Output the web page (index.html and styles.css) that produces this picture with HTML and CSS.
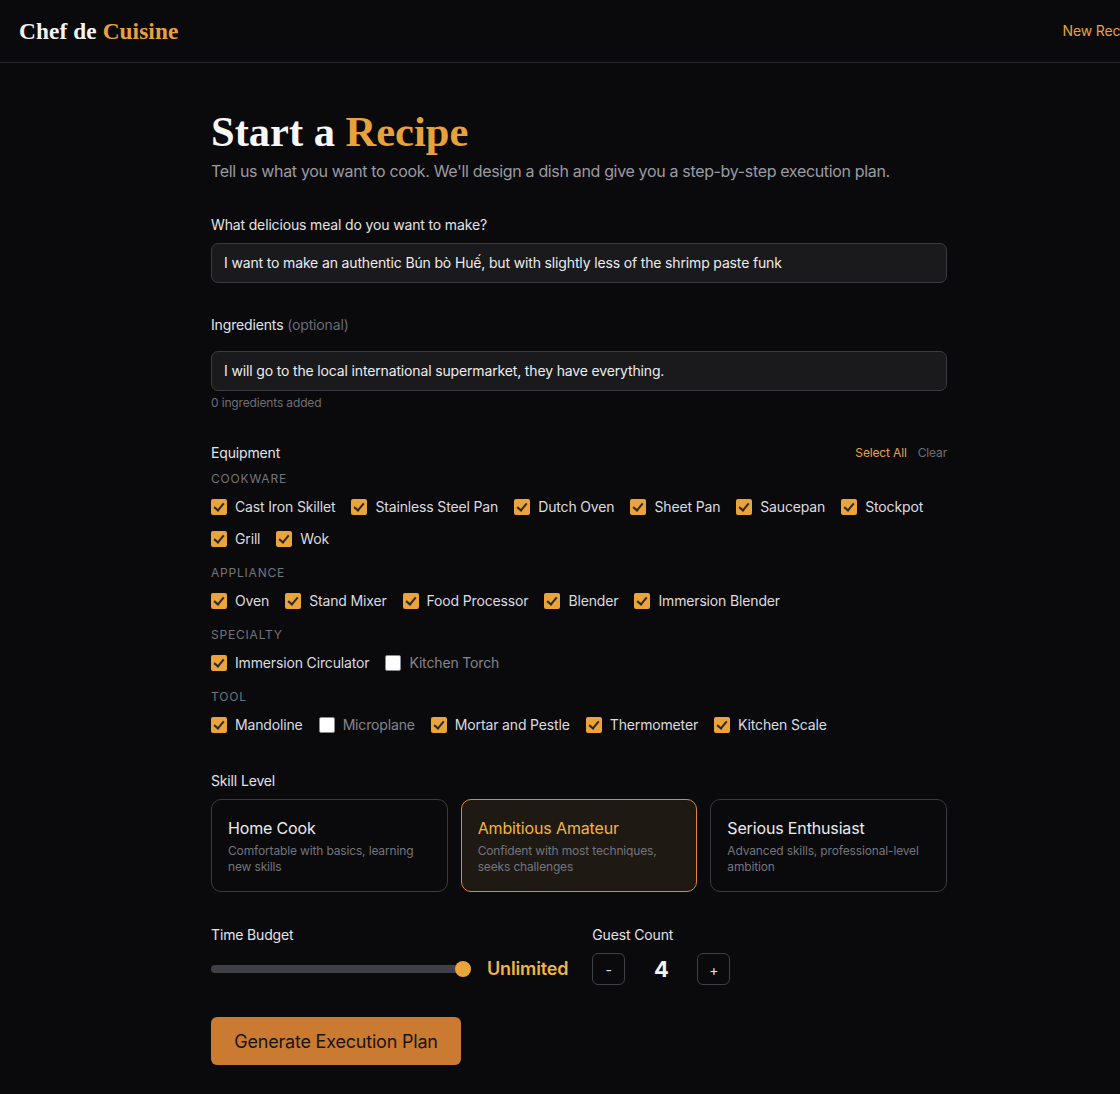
FILE: index.html
```html
<!DOCTYPE html>
<html lang="en">
<head>
<meta charset="utf-8">
<title>Chef de Cuisine</title>
<link rel="stylesheet" href="styles.css">
</head>
<body>
<div class="page">
  <header class="topbar">
    <div class="logo">Chef de <span class="accent">Cuisine</span></div>
    <nav class="nav"><a class="nav-link" href="#">New Recipe</a></nav>
  </header>

  <main class="form">
    <h1 class="title">Start a <span class="accent">Recipe</span></h1>
    <p class="subtitle">Tell us what you want to cook. We'll design a dish and give you a step-by-step execution plan.</p>

    <section class="field field-meal">
      <label class="label">What delicious meal do you want to make?</label>
      <div class="input">I want to make an authentic Bún bò Huế, but with slightly less of the shrimp paste funk</div>
    </section>

    <section class="field field-ingredients">
      <label class="label">Ingredients <span class="muted">(optional)</span></label>
      <div class="input">I will go to the local international supermarket, they have everything.</div>
      <div class="hint">0 ingredients added</div>
    </section>

    <section class="field field-equipment">
      <div class="equip-head">
        <span class="label">Equipment</span>
        <span class="equip-actions"><a class="act-select" href="#">Select All</a><a class="act-clear" href="#">Clear</a></span>
      </div>

      <div class="group-title">Cookware</div>
      <div class="checks">
        <span class="check on"><span class="box"></span>Cast Iron Skillet</span>
        <span class="check on"><span class="box"></span>Stainless Steel Pan</span>
        <span class="check on"><span class="box"></span>Dutch Oven</span>
        <span class="check on"><span class="box"></span>Sheet Pan</span>
        <span class="check on"><span class="box"></span>Saucepan</span>
        <span class="check on"><span class="box"></span>Stockpot</span>
        <span class="check on"><span class="box"></span>Grill</span>
        <span class="check on"><span class="box"></span>Wok</span>
      </div>

      <div class="group-title">Appliance</div>
      <div class="checks">
        <span class="check on"><span class="box"></span>Oven</span>
        <span class="check on"><span class="box"></span>Stand Mixer</span>
        <span class="check on"><span class="box"></span>Food Processor</span>
        <span class="check on"><span class="box"></span>Blender</span>
        <span class="check on"><span class="box"></span>Immersion Blender</span>
      </div>

      <div class="group-title">Specialty</div>
      <div class="checks">
        <span class="check on"><span class="box"></span>Immersion Circulator</span>
        <span class="check off"><span class="box"></span>Kitchen Torch</span>
      </div>

      <div class="group-title">Tool</div>
      <div class="checks">
        <span class="check on"><span class="box"></span>Mandoline</span>
        <span class="check off"><span class="box"></span>Microplane</span>
        <span class="check on"><span class="box"></span>Mortar and Pestle</span>
        <span class="check on"><span class="box"></span>Thermometer</span>
        <span class="check on"><span class="box"></span>Kitchen Scale</span>
      </div>
    </section>

    <section class="field field-skill">
      <div class="label">Skill Level</div>
      <div class="skills">
        <div class="skill">
          <div class="skill-name">Home Cook</div>
          <div class="skill-desc">Comfortable with basics, learning new skills</div>
        </div>
        <div class="skill selected">
          <div class="skill-name">Ambitious Amateur</div>
          <div class="skill-desc">Confident with most techniques, seeks challenges</div>
        </div>
        <div class="skill">
          <div class="skill-name">Serious Enthusiast</div>
          <div class="skill-desc">Advanced skills, professional-level ambition</div>
        </div>
      </div>
    </section>

    <section class="field field-row">
      <div class="col">
        <div class="label">Time Budget</div>
        <div class="slider-row">
          <div class="track"><span class="thumb"></span></div>
          <span class="slider-value">Unlimited</span>
        </div>
      </div>
      <div class="col">
        <div class="label">Guest Count</div>
        <div class="counter">
          <button class="step">-</button>
          <span class="count">4</span>
          <button class="step">+</button>
        </div>
      </div>
    </section>

    <button class="submit">Generate Execution Plan</button>
  </main>
</div>
</body>
</html>
```

FILE: styles.css
```css
html, body {
  margin: 0;
  padding: 0;
  background: #0a0a0c;
  overflow: hidden;
}

body {
  font-family: Inter, "Noto Sans", "Liberation Sans", sans-serif;
  color: #e4e4e7;
  font-size: 14px;
  line-height: 20px;
  letter-spacing: -0.15px;
}

.page {
  width: 1158px;
  min-height: 1094px;
}

.accent { color: #e8a23c; }

.topbar {
  height: 62px;
  border-bottom: 1px solid #2a2a2e;
  display: flex;
  align-items: center;
  justify-content: space-between;
  padding: 0 18px 0 19px;
}

.logo {
  font-family: "Liberation Serif", "Times New Roman", serif;
  font-weight: 700;
  font-size: 23.3px;
  color: #f4f4f5;
  letter-spacing: 0.1px;
}

.nav-link {
  color: #e8a23c;
  text-decoration: none;
  font-size: 14px;
}

.form {
  width: 736px;
  margin: 0 auto;
  padding-top: 46px;
}

.title {
  margin: 0;
  font-family: "Liberation Serif", "Times New Roman", serif;
  font-weight: 700;
  font-size: 42.5px;
  line-height: 46px;
  letter-spacing: 0;
  color: #f7f7f8;
}

.subtitle {
  margin: 4px 0 0;
  font-size: 16px;
  line-height: 24px;
  letter-spacing: -0.34px;
  color: #9a9aa2;
}

.field { margin-top: 32px; }

.label {
  display: block;
  font-size: 14px;
  line-height: 20px;
  color: #e4e4e7;
}

.muted { color: #6b6b73; }

.input {
  margin-top: 8px;
  height: 38px;
  border: 1px solid #3a3a40;
  border-radius: 7px;
  background: #1a1a1d;
  padding: 0 12px;
  display: flex;
  align-items: center;
  font-size: 14px;
  color: #ececef;
}

.field-ingredients .input { margin-top: 16px; }

.hint {
  margin-top: 4px;
  font-size: 12px;
  line-height: 16px;
  color: #6e6e76;
}

.equip-head {
  display: flex;
  justify-content: space-between;
  align-items: center;
}

.equip-actions {
  display: flex;
  gap: 11px;
  font-size: 12px;
}

.act-select { color: #e8a23c; text-decoration: none; }
.act-clear { color: #6e6e76; text-decoration: none; }

.group-title {
  margin-top: 16px;
  font-size: 12px;
  line-height: 16px;
  letter-spacing: 0.8px;
  text-transform: uppercase;
  color: #74747c;
}

.field-equipment .equip-head + .group-title { margin-top: 8px; }

.checks {
  margin-top: 10px;
  display: flex;
  flex-wrap: wrap;
  column-gap: 16px;
  row-gap: 12px;
}

.check {
  display: inline-flex;
  align-items: center;
  gap: 8px;
  font-size: 14px;
  line-height: 20px;
  color: #dcdce0;
}

.check.off { color: #85858c; }

.box {
  width: 16px;
  height: 16px;
  border-radius: 2px;
  box-sizing: border-box;
  flex: none;
  position: relative;
}

.check.on .box {
  background: #eba33b;
}

.check.on .box::after {
  content: "";
  position: absolute;
  left: 5px;
  top: 2px;
  width: 4px;
  height: 8px;
  border-right: 2px solid #2c2a28;
  border-bottom: 2px solid #2c2a28;
  transform: rotate(40deg);
}

.check.off .box {
  background: #ffffff;
  border: 1px solid #8a8a90;
}

.field-skill { margin-top: 36px; }

.skills {
  margin-top: 8px;
  display: grid;
  grid-template-columns: repeat(3, 1fr);
  gap: 13px;
}

.skill {
  border: 1px solid #3a3a40;
  border-radius: 10px;
  padding: 16px;
  background: #0a0a0c;
}

.skill.selected {
  border-color: #d98a32;
  background: #1f1913;
}

.skill-name {
  font-size: 16px;
  line-height: 24px;
  color: #ececef;
}

.skill.selected .skill-name { color: #f2b53f; }

.skill-desc {
  margin-top: 3px;
  font-size: 12px;
  line-height: 16px;
  color: #74747c;
}

.field-row {
  margin-top: 33px;
  display: flex;
  gap: 24px;
}

.slider-row {
  margin-top: 8px;
  height: 32px;
  display: flex;
  align-items: center;
  gap: 16px;
}

.track {
  width: 260px;
  height: 8px;
  border-radius: 4px;
  background: #3f3f46;
  position: relative;
}

.thumb {
  position: absolute;
  right: 0;
  top: -4px;
  width: 16px;
  height: 16px;
  border-radius: 50%;
  background: #eba33b;
}

.slider-value {
  font-size: 18px;
  font-weight: 600;
  color: #f2b53f;
}

.counter {
  margin-top: 8px;
  display: flex;
  align-items: center;
  gap: 12px;
}

.step {
  width: 33px;
  height: 32px;
  border: 1px solid #3f3f46;
  border-radius: 6px;
  background: transparent;
  color: #e4e4e7;
  font-family: Inter, "Noto Sans", sans-serif;
  font-size: 14px;
  padding: 0;
}

.count {
  width: 48px;
  text-align: center;
  font-size: 22px;
  font-weight: 700;
  color: #f4f4f5;
}

.submit {
  margin-top: 32px;
  width: 250px;
  height: 48px;
  border: none;
  border-radius: 6px;
  background: #cb7b31;
  color: #1a1410;
  font-family: Inter, "Noto Sans", sans-serif;
  font-size: 18px;
  letter-spacing: -0.2px;
  padding: 0;
}
```
